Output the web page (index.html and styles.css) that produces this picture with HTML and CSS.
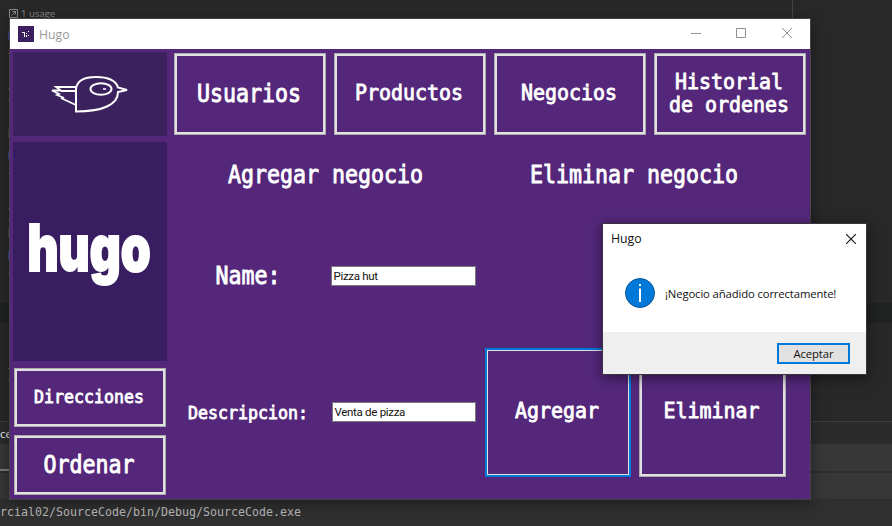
FILE: index.html
```html
<!DOCTYPE html>
<html lang="es">
<head>
<meta charset="utf-8">
<title>Hugo</title>
<link rel="stylesheet" href="styles.css">
</head>
<body>
<div class="desktop">
  <div class="ide">
    <div class="ide-editor">
      <div class="ide-usage"><svg width="9" height="9" viewBox="0 0 9 9"><path d="M.5.5h8v8h-8zM2.5 6.5l4-4M3.5 2.5h3v3" fill="none" stroke="#8a8a8a"/></svg><span>1 usage</span></div>
    </div>
    <div class="ide-strip"></div>
    <div class="ide-gap"></div>
    <div class="ide-tabs">ce</div>
    <div class="ide-row ide-row-active"></div>
    <div class="ide-row"></div>
    <div class="ide-console">rcial02/SourceCode/bin/Debug/SourceCode.exe</div>
  </div>
  <svg class="ide-marks" width="2" height="400" viewBox="0 0 2 400">
    <path d="M1 31v9M1 151v8M1 251v9" stroke="#3c3f9c" stroke-width="2"/>
    <path d="M1 53v1M1 88v1M1 99v1M1 173v1M1 208v1M1 219v1M1 273v1M1 368v1M1 379v1" stroke="#668a7c" stroke-width="1"/>
    <path d="M1 129v9M1 229v9" stroke="#666" stroke-width="1"/>
  </svg>

  <section class="window">
    <header class="titlebar">
      <svg class="app-icon" width="16" height="16" viewBox="0 0 16 16"><path d="M0 0h16v16H0z" fill="#3b1f5f"/><path d="M4 6h3v2H6V7H4zM6 8h1v3H6zM8 7h1v1H8zM8 9h1v2H8zM10 5h1v1h-1zM10 9h1v1h-1z" fill="#fff"/></svg>
      <span class="title">Hugo</span>
      <svg class="controls" width="102" height="12" viewBox="0 0 102 12"><path d="M0 6.5h10M45.500 1.500h9v9h-9zM91 1l10 10M101 1L91 11" fill="none" stroke="#8f8f8f"/></svg>
    </header>
    <div class="client">
      <aside class="side">
        <div class="panel bird">
          <svg width="80" height="42" viewBox="0 0 80 42" fill="none" stroke="#fff" stroke-width="2"><path d="M26 38.500V16C27 7 34 4 46 4 58 4 66 8 68 14.500L77 17 68 19C68 31 54 38.500 26 38.500z"/><ellipse cx="51" cy="16" rx="10.500" ry="5.700"/><path d="M53 16h3" stroke-width="1.500"/><path d="M26 14H6L11 17.500H2L9 21 7 22 13 24.500 12 25.500 26 32M11 18H26" stroke-width="1.800"/></svg>
        </div>
        <div class="panel logo">
          <svg width="140" height="100" viewBox="0 0 140 100"><text class="logo-text" transform="translate(7.500 69) scale(.7 1)" x="0" y="0" textLength="176" lengthAdjust="spacingAndGlyphs">hugo</text></svg>
        </div>
        <button class="btn"><span class="t t-s">Direcciones</span></button>
        <button class="btn"><span class="t t-l">Ordenar</span></button>
      </aside>
      <div class="content">
        <nav class="nav">
          <button class="btn"><span class="t t-l">Usuarios</span></button>
          <button class="btn"><span class="t t-m">Productos</span></button>
          <button class="btn"><span class="t t-m">Negocios</span></button>
          <button class="btn"><span class="t t-m">Historial<br>de ordenes</span></button>
        </nav>
        <main class="form">
          <h2 class="heading"><span class="t t-l">Agregar negocio</span></h2>
          <h2 class="heading heading-right"><span class="t t-l">Eliminar negocio</span></h2>
          <label class="cell"><span class="t t-l">Name:</span></label>
          <div class="cell"><div class="field">Pizza hut</div></div>
          <div class="cell"></div>
          <div class="cell"></div>
          <label class="cell"><span class="t t-s">Descripcion:</span></label>
          <div class="cell"><div class="field field-short">Venta de pizza</div></div>
          <button class="btn btn-focus"><span class="t t-m">Agregar</span></button>
          <button class="btn"><span class="t t-m">Eliminar</span></button>
        </main>
      </div>
    </div>
  </section>

  <section class="dialog">
    <header class="dialog-head"><span>Hugo</span><svg width="10" height="10" viewBox="0 0 10 10"><path d="M0 0l10 10M10 0L0 10" stroke="#111" stroke-width="1.100"/></svg></header>
    <div class="dialog-body">
      <svg width="30" height="30" viewBox="0 0 30 30"><circle cx="15" cy="15" r="14.500" fill="#0078d7" stroke="#0a5596"/><path d="M15 10.500v13.500M15 6v2" stroke="#fff" stroke-width="2"/></svg>
      <span class="message">¡Negocio añadido correctamente!</span>
    </div>
    <footer class="dialog-foot"><button class="accept">Aceptar</button></footer>
  </section>
</div>
</body>
</html>
```
FILE: styles.css
```css
* { box-sizing: border-box; }
body { margin: 0; font-family: "Open Sans", "Noto Sans", sans-serif; }
button { font: inherit; padding: 0; border-radius: 0; }

.desktop { position: relative; width: 892px; height: 526px; overflow: hidden; background: #282828; }

/* Code editor behind the windows */
.ide { display: flex; flex-direction: column; height: 526px; }
.ide-editor { width: 793px; height: 303px; border-right: 1px solid #444; padding: 9px 0 0 9px; }
.ide-usage { display: flex; align-items: center; gap: 3px; height: 9px; font-size: 9.5px; color: #8a8a8a; }
.ide-usage span { line-height: 11px; }
.ide-strip { height: 20px; background: #212322; }
.ide-gap { height: 98px; }
.ide-tabs { height: 23px; border-top: 1px solid #3d3d3d; background: #2b2b2b; color: #eee; font-size: 11.5px; line-height: 24px; }
.ide-row { height: 26px; background: #373737; }
.ide-row-active { height: 29px; border-bottom: 2px solid #2d2d2d; background: linear-gradient(#777b80, #777b80) 0 25px / 10px 3px no-repeat #373737; }
.ide-console { flex: 1; background: #2f2f2f; color: #b4b4b4; font: 11.630px/27px "DejaVu Sans Mono", monospace; }
.ide-marks { position: absolute; left: 8px; top: 0; }

/* Main application window */
.window { position: absolute; left: 9px; top: 18px; width: 802px; height: 482px; border: 1px solid #454545; background: #54277b; box-shadow: 0 3px 12px rgba(0,0,0,.4); }
.titlebar { display: flex; align-items: center; height: 30px; padding: 0 18px 0 8px; background: #fff; }
.title { margin-left: 5px; font-size: 12.300px; color: #999; }
.controls { margin: 0 -1px 2px auto; }
.client { display: flex; height: 450px; }
.side { width: 160px; display: grid; grid-template-rows: 90px 225px 67px 68px; }
.panel { margin: 3px; display: flex; align-items: center; justify-content: center; background: #3b215d; }
.logo { background: #381d61; }
.logo-text { font: 900 64px Inter, sans-serif; fill: #fff; stroke: #fff; stroke-width: 2px; }
.content { width: 640px; }
.nav { display: grid; grid-template-columns: repeat(4, 160px); height: 90px; }
.form { display: grid; grid-template-columns: 156px 155px 154px 155px; grid-template-rows: 68px 137px 137px; }
.heading { grid-column: span 2; margin: 4px 0 0; display: flex; align-items: center; justify-content: center; }
.heading-right { padding-right: 3px; }
.cell { display: flex; align-items: center; justify-content: center; }

.btn { margin: 4px; padding: 0 2px 1px 0; border: 1px solid #adadad; background: #54277b; box-shadow: inset 0 0 0 2px #e1e1e1; display: flex; align-items: center; justify-content: center; }
.btn-focus { border: 2px solid #0078d7; box-shadow: inset 0 0 0 1px #e1e1e1; }

/* Tall monospaced lettering, one class per size */
.t { display: inline-block; color: #fff; font-family: "DejaVu Sans Mono", monospace; font-weight: 400; text-align: center; white-space: nowrap; -webkit-text-stroke: .8px #fff; }
.t-l { font-size: 21.600px; line-height: 24px; transform: scaleY(1.120); }
.t-m { font-size: 19.930px; line-height: 22px; transform: scaleY(1.040); }
.t-s { font-size: 16.610px; line-height: 20px; transform: scaleY(1.100); }

.field { width: 145px; height: 20px; margin-left: -1px; padding-left: 2px; border: 1px solid #7a7a7a; background: #fff; color: #111; font: 11.500px/18px Roboto, "Liberation Sans", sans-serif; letter-spacing: -.3px; }
.field-short { width: 144px; margin: -2px 0 0; }

/* Message box */
.dialog { position: absolute; left: 602px; top: 223px; width: 265px; height: 152px; border: 1px solid #3a3340; background: #fff; color: #111; box-shadow: 0 3px 12px rgba(0,0,0,.5); }
.dialog-head { display: flex; align-items: center; justify-content: space-between; height: 29px; padding: 0 10px 0 8px; font-size: 12.300px; }
.dialog-body { display: flex; align-items: center; gap: 10px; height: 79px; padding: 1px 0 0 22px; }
.message { font-size: 11.300px; letter-spacing: -.13px; white-space: nowrap; }
.dialog-foot { display: flex; align-items: center; justify-content: flex-end; height: 42px; padding-right: 16px; background: #efefef; }
.accept { width: 73px; height: 21px; border: 2px solid #0078d7; background: #e1e1e1; color: #111; font-size: 11.300px; letter-spacing: -.13px; line-height: 17px; }
```
